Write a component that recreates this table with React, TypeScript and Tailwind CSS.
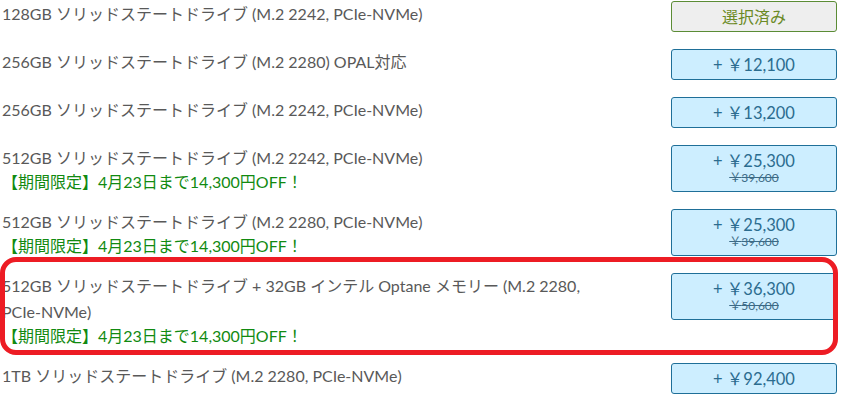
type Option = {
  title: string
  note?: string
  price?: string
  was?: string
  selected?: boolean
  marked?: boolean
}

const options: Option[] = [
  { title: '128GB ソリッドステートドライブ (M.2 2242, PCIe-NVMe)', selected: true },
  { title: '256GB ソリッドステートドライブ (M.2 2280) OPAL対応', price: '12,100' },
  { title: '256GB ソリッドステートドライブ (M.2 2242, PCIe-NVMe)', price: '13,200' },
  {
    title: '512GB ソリッドステートドライブ (M.2 2242, PCIe-NVMe)',
    note: '【期間限定】4月23日まで14,300円OFF！',
    price: '25,300',
    was: '39,600',
  },
  {
    title: '512GB ソリッドステートドライブ (M.2 2280, PCIe-NVMe)',
    note: '【期間限定】4月23日まで14,300円OFF！',
    price: '25,300',
    was: '39,600',
  },
  {
    title: '512GB ソリッドステートドライブ + 32GB インテル Optane メモリー (M.2 2280, PCIe-NVMe)',
    note: '【期間限定】4月23日まで14,300円OFF！',
    price: '36,300',
    was: '50,600',
    marked: true,
  },
  { title: '1TB ソリッドステートドライブ (M.2 2280, PCIe-NVMe)', price: '92,400' },
]

function PriceButton({ option }: { option: Option }) {
  if (option.selected) {
    return (
      <button className="w-[166px] h-[31px] shrink-0 flex items-center justify-center rounded-[3px] border border-[#5b8c35] bg-[#eeeeee] text-[16px] text-[#6b8a26]">
        選択済み
      </button>
    )
  }
  if (option.was) {
    return (
      <button className="w-[166px] h-[47px] shrink-0 flex flex-col items-center pt-[5px] rounded-[3px] border border-[#1f6f98] bg-[#cdeeff] text-[#2b6c8f]">
        <span className="text-[16.5px] leading-[20px]">+ ￥{option.price}</span>
        <span className="text-[12px] leading-[13px] line-through text-[#3c6a86]">￥{option.was}</span>
      </button>
    )
  }
  return (
    <button className="w-[166px] h-[31px] shrink-0 flex items-center justify-center rounded-[3px] border border-[#1f6f98] bg-[#cdeeff] text-[16.5px] leading-[20px] text-[#2b6c8f]">
      + ￥{option.price}
    </button>
  )
}

export default function App() {
  return (
    <div
      className="w-[842px] h-[401px] overflow-hidden bg-white pt-[1px] pl-[2px] pr-[5px] flex flex-col gap-[17px]"
      style={{ fontFamily: 'Lato, "Noto Sans CJK JP", sans-serif' }}
    >
      {options.map((option, i) => (
        <div key={i} className="relative flex items-start justify-between">
          <div className="w-[600px]">
            <p className="text-[16px] leading-[26px] text-[#595959]">{option.title}</p>
            {option.note && (
              <p className="text-[16px] leading-[21px] text-[#118a11]">{option.note}</p>
            )}
          </div>
          <PriceButton option={option} />
          {option.marked && (
            <div className="absolute left-[-2px] right-[-1px] top-[-16px] bottom-[-9px] rounded-[16px] border-[5px] border-[#ed1c24] pointer-events-none" />
          )}
        </div>
      ))}
    </div>
  )
}
